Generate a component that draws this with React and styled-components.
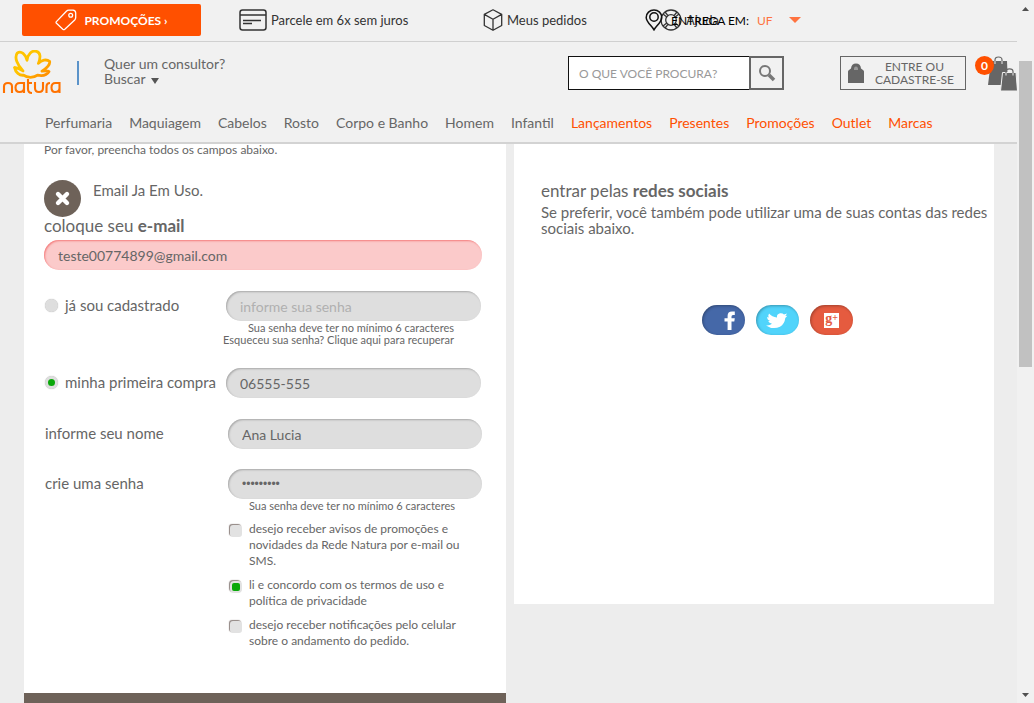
import React from "react";
import styled, { createGlobalStyle, css } from "styled-components";

const GlobalStyle = createGlobalStyle`
  *, *::before, *::after { box-sizing: border-box; }
  body {
    margin: 0;
    background: #ededed;
    color: #666;
    font-family: Lato, "Liberation Sans", sans-serif;
    font-size: 14px;
    line-height: 16px;
  }
  a { color: inherit; text-decoration: none; }
  p, h2, ul { margin: 0; padding: 0; font-weight: 400; }
  button, input { font-family: inherit; }
`;

const Shell = styled.div`
  display: grid;
  grid-template-columns: 1fr 17px;
  min-height: 100vh;
`;

const Page = styled.div`
  min-width: 0;
`;

const Header = styled.header`
  background: #f1f1f1;
  border-bottom: 2px solid #d3d3d3;
`;

const TopBar = styled.div`
  display: grid;
  grid-template-columns: 217fr 244fr 177fr 357fr;
  align-items: center;
  height: 42px;
  padding: 0 0 1px 22px;
  border-bottom: 1px solid #d0d0d0;
`;

const PromoButton = styled.button`
  display: flex;
  align-items: center;
  justify-content: center;
  gap: 7px;
  height: 32px;
  margin-right: 38px;
  padding: 0;
  border: 0;
  border-radius: 2px;
  background: #ff5000;
  color: #fff;
  font-size: 12px;
  font-weight: 700;
`;

const TopLink = styled.a`
  display: flex;
  align-items: center;
  gap: 4px;
  color: #333;
  font-size: 13px;
`;

const HelpSlot = styled.div`
  position: relative;
`;

const Delivery = styled.button`
  position: absolute;
  top: 0;
  left: -15px;
  display: flex;
  align-items: center;
  gap: 8px;
  height: 22px;
  padding: 0;
  border: 0;
  background: none;
  color: #000;
  font-size: 12px;
  white-space: nowrap;

  span { color: #ff7340; }
  svg:last-child { margin-left: 8px; }
`;

const Main = styled.div`
  display: flex;
  align-items: center;
  height: 60px;
  padding: 2px 0 0 2px;
`;

const Divider = styled.div`
  width: 2px;
  height: 24px;
  margin: 0 25px 0 16px;
  background: #5b93c9;
`;

const Consultant = styled.a`
  display: grid;
  padding-bottom: 5px;
  line-height: 15px;

  svg { margin-left: 2px; }
`;

const Search = styled.form`
  display: flex;
  width: 216px;
  height: 34px;
  margin-left: auto;
`;

const SearchInput = styled.input`
  flex: 1;
  min-width: 0;
  padding: 0 10px;
  border: 1px solid #111;
  border-right: 0;
  border-radius: 0;
  background: #fff;
  font-size: 12px;

  &::placeholder { color: #999; opacity: 1; }
`;

const SearchButton = styled.button`
  display: grid;
  place-items: center;
  width: 35px;
  padding: 0;
  border: 2px solid #666;
  background: #f1f1f1;
`;

const AccountButton = styled.button`
  display: flex;
  align-items: center;
  width: 126px;
  height: 34px;
  margin: 0 9px 0 56px;
  padding: 0 0 0 7px;
  border: 1px solid #666;
  background: transparent;
  color: #666;
  font-size: 12px;
  line-height: 13px;

  span { flex: 1; }
`;

const Cart = styled.a`
  display: flex;
  position: relative;
  width: 42px;
  height: 34px;
  justify-content: flex-end;
`;

const CartCount = styled.span`
  position: absolute;
  top: 0;
  left: 0;
  width: 19px;
  height: 19px;
  border-radius: 50%;
  background: #ff5000;
  color: #fff;
  font-size: 12px;
  font-weight: 700;
  line-height: 19px;
  text-align: center;
`;

const Nav = styled.nav`
  display: flex;
  gap: 17px;
  align-items: center;
  height: 40px;
  padding: 2px 0 0 45px;
  white-space: nowrap;
`;

const NavLink = styled.a`
  color: ${(p) => (p.$hot ? "#ff5000" : "#666")};
`;

const Content = styled.main`
  display: grid;
  grid-template-columns: minmax(0, 482fr) minmax(0, 480fr);
  gap: 8px;
  align-items: start;
  padding: 0 23px 0 24px;
`;

const FormCard = styled.form`
  background: #fff;
`;

const FormBody = styled.div`
  padding: 0 24px 44px 20px;
`;

const CardFooter = styled.div`
  height: 10px;
  background: #6e6259;
`;

const Intro = styled.p`
  font-size: 12px;
  line-height: 12px;
`;

const ErrorMessage = styled.div`
  display: flex;
  gap: 12px;
  margin-top: 24px;
  font-size: 15px;
  line-height: 20px;
`;

const EmailLabel = styled.label`
  display: block;
  font-size: 17px;
  line-height: 18px;
  padding-bottom: 5px;
`;

const Field = styled.input`
  display: block;
  width: 100%;
  height: 30px;
  padding: 0 14px;
  border: 0;
  border-radius: 15px;
  background: #dedede;
  box-shadow: inset 1px 1px 2px #a8a8a8;
  color: #666;
  font-size: 14px;
  outline: 0;

  &::placeholder { color: #b0b0b0; opacity: 1; }

  &[type="password"]:not(:placeholder-shown) {
    font-family: "Liberation Sans", sans-serif;
    font-size: 12px;
  }

  ${(p) => p.$error && css`
    background: #fbcaca;
    box-shadow: inset 1px 1px 2px #f47c7c;
  `}
`;

const Row = styled.div`
  display: grid;
  grid-template-columns: ${(p) => (p.$wide ? "184px" : "182px")} minmax(0, 1fr);
  padding-right: ${(p) => (p.$wide ? "0" : "1px")};
  margin-top: ${(p) => p.$top}px;
`;

const RowLabel = styled.label`
  display: flex;
  align-items: center;
  gap: 7px;
  height: 30px;
  padding: 0 0 2px 1px;
  font-size: 15px;
`;

const Radio = styled.input`
  appearance: none;
  width: 13px;
  height: 13px;
  margin: 0;
  border: 3px solid #dedede;
  border-radius: 50%;
  background: #dedede;
  box-shadow: 0 0 1px #aaa;

  &:checked { background: #0aa80a; }
`;

const Hint = styled.p`
  display: grid;
  justify-content: end;
  justify-items: end;
  padding: 1px 27px 0 0;
  font-size: 11px;
  line-height: 12px;
  white-space: nowrap;
`;

const Options = styled.div`
  display: grid;
  gap: 8px;
  margin: 9px 20px 0 186px;
`;

const Option = styled.label`
  display: grid;
  grid-template-columns: 13px 1fr;
  gap: 6px;
  font-size: 12px;
  line-height: 16px;
`;

const Checkbox = styled.input`
  appearance: none;
  width: 12px;
  height: 12px;
  margin: 4px 0 0;
  border: 3px solid #e2e2e2;
  border-radius: 3px;
  background: #e2e2e2;
  box-shadow: -1px -1px 1px #8f8480;

  &:checked {
    border-width: 2px;
    border-radius: 4px;
    background: #0aa80a;
  }
`;

const SocialCard = styled.section`
  min-height: 460px;
  padding: 37px 0 0 27px;
  background: #fff;
`;

const SocialTitle = styled.h2`
  font-size: 17px;
  line-height: 20px;
`;

const SocialText = styled.p`
  padding-top: 3px;
  font-size: 15px;
`;

const SocialButtons = styled.div`
  display: flex;
  justify-content: center;
  gap: 11px;
  padding: 69px 0 0 20px;
`;

const SocialButton = styled.button`
  width: 43px;
  height: 30px;
  padding: 0;
  border: 0;
  border-radius: 15px;
  background: ${(p) => p.$color};
  box-shadow: inset 1px 1px 3px rgba(0, 0, 0, 0.3);

  svg { display: block; }
`;

const Scrollbar = styled.div`
  position: sticky;
  top: 0;
  display: grid;
  grid-template-rows: 17px 44fr 306fr 319fr 17px;
  justify-items: center;
  height: 100vh;
  background: #f1f1f1;

  svg { align-self: center; }
`;

const Thumb = styled.div`
  grid-row: 3;
  width: 13px;
  background: #c1c1c1;
`;

const ArrowUp = styled.div`
  grid-row: 1;
  display: grid;
`;

const ArrowDown = styled.div`
  grid-row: 5;
  display: grid;
`;

const Triangle = ({ width, height, color, up }) => (
  <svg width={width} height={height} viewBox="0 0 10 6" preserveAspectRatio="none">
    <path d={up ? "M0 6L5 0L10 6Z" : "M0 0H10L5 6Z"} fill={color} />
  </svg>
);

const TagIcon = () => (
  <svg width="22" height="22" viewBox="0 0 22 22" fill="none" stroke="#fff" strokeWidth="1.3">
    <path d="M1.4 12.6L11.4 2.2Q12.4 1.2 13.8 1.2H18Q20.6 1.5 20.7 4V8.6Q20.7 10 19.7 11L9.8 20.2Q8.8 21 7.8 20.2L1.5 14.3Q.7 13.5 1.4 12.6Z" />
    <circle cx="15.7" cy="6.2" r="1.9" />
  </svg>
);

const CardIcon = () => (
  <svg width="28" height="22" viewBox="0 0 28 22" fill="none" stroke="#333" strokeWidth="1.5">
    <rect x="1" y="1" width="26" height="20" rx="2.5" />
    <path d="M1 6H27M4 11.5H22M4 14.5H13" />
  </svg>
);

const BoxIcon = () => (
  <svg width="20" height="22" viewBox="0 0 20 22" fill="none" stroke="#333" strokeWidth="1.3" strokeLinejoin="round">
    <path d="M10 .8L18.7 5.4V16.5L10 21.3L1.3 16.5V5.4ZM1.3 5.4L10 10.3L18.7 5.4M10 10.3V21.3" />
  </svg>
);

const HelpIcon = () => (
  <svg width="22" height="22" viewBox="0 0 22 22" fill="none" stroke="#333" strokeWidth="1.3">
    <circle cx="11" cy="11" r="10" />
    <circle cx="11" cy="11" r="5.3" />
    <path d="M3 5L6.8 8M5 3L8 6.7M14 6.7L17 3M15.2 8L19 5M15.2 14L19 17M14 15.3L17 19M8 15.3L5 19M6.8 14L3 17" />
  </svg>
);

const PinIcon = () => (
  <svg width="18" height="22" viewBox="0 0 18 22" fill="none" stroke="#111" strokeWidth="1.5">
    <path d="M9 20.8C7 17 1.2 13 1.2 8.4A7.8 7.5 0 0 1 16.8 8.4C16.8 13 11 17 9 20.8Z" />
    <circle cx="9" cy="8" r="4.2" />
  </svg>
);

const LogoLink = styled.a`
  display: grid;
  width: 59px;
  height: 46px;
`;

const Logo = () => (
  <svg width="59" height="46" viewBox="0 0 59 46" fill="none">
    <defs>
      <linearGradient id="petals" x1="0" y1="0" x2="1" y2="1">
        <stop offset="0.45" stopColor="#ffc400" />
        <stop offset="1" stopColor="#ff8500" />
      </linearGradient>
    </defs>
    <path
      d="M12.5 17.5C16.5 18 19 19.5 21 21C15.5 15 12 7.5 15.2 3.2C19 .2 23.8 4.5 25 10.3C25.7 4 30 0 34.5 1.4C38.8 2.8 38.7 7.5 36.4 13.4C39.5 9.9 44.5 9 47.6 11.3C48.6 15.2 44 18.5 40 21.2C42.8 20.8 45.7 20.4 47 21.5C44.6 25.6 39.5 26 35.5 25.2C32 28 25 28 21.5 25.2C17.5 25.6 13.5 22.5 12.5 17.5Z"
      stroke="url(#petals)"
      strokeWidth="2.8"
      strokeLinejoin="round"
    />
    <g stroke="#ff7200" strokeWidth="2.1">
      <path d="M2 43V36.5Q2 33 6 33Q10 33 10 36.5V43" />
      <path d="M22 43V33H18Q13.5 33 13.5 37.5Q13.5 42 17.5 42Q22 42 22 38" />
      <path d="M26 29V39Q26 43 30 43M26 33H30" />
      <path d="M33 32V38Q33 42 37 42Q41 42 41 38V32" />
      <path d="M44.5 43V37Q44.5 33 48 33" />
      <path d="M57.5 43V33H53.5Q49.5 33 49.5 37.5Q49.5 42 53 42Q57.5 42 57.5 38" />
    </g>
  </svg>
);

const SearchIcon = () => (
  <svg width="18" height="18" viewBox="0 0 18 18" fill="none" stroke="#777">
    <circle cx="7" cy="7" r="5" strokeWidth="2" />
    <path d="M11 11L16 16" strokeWidth="3.5" />
  </svg>
);

const LockIcon = () => (
  <svg width="16" height="20" viewBox="0 0 16 20">
    <path d="M0 8.5Q0 7.5 1 7L3 5.5Q3.5 .5 8 .5T13 5.5L15 7Q16 7.5 16 8.5V20H0Z" fill="#666" />
    <path d="M6 7Q5.7 3.5 8 3.5T10 7Z" fill="#999" />
  </svg>
);

const BagsIcon = () => (
  <svg width="30" height="35" viewBox="0 0 30 35" fill="none">
    <path d="M4 5H20L21 29H1Z" fill="#666" />
    <path d="M8 8V4Q8 1 11.5 1T15 4V8" stroke="#666" strokeWidth="1.2" />
    <path d="M8 5V8M15 5V8" stroke="#eee" />
    <path d="M15.5 16.5H29L30.5 35H13.5Z" fill="#666" stroke="#f1f1f1" />
    <path d="M19 17V15.5Q19 12.8 22.5 12.8T26 15.5V17" stroke="#666" strokeWidth="1.2" />
    <path d="M19 17V19.5M26 17V19.5" stroke="#eee" />
  </svg>
);

const ErrorIcon = () => (
  <svg width="37" height="37" viewBox="0 0 37 37">
    <circle cx="18.5" cy="18.5" r="18.5" fill="#6e6259" />
    <path d="M14 14L23 23M23 14L14 23" stroke="#fff" strokeWidth="4.4" strokeLinecap="round" />
  </svg>
);

const FacebookIcon = () => (
  <svg width="43" height="30" viewBox="0 0 43 30">
    <path d="M25.6 25V16.6H22.5V13.2H25.6V10.8Q25.6 6.5 30 6.5H32.8V10H31Q29.5 10 29.5 11.5V13.2H32.8L32.3 16.6H29.5V25Z" fill="#fff" />
  </svg>
);

const TwitterIcon = () => (
  <svg width="43" height="30" viewBox="0 0 43 30">
    <path d="M10 20.4Q13.6 20.8 16 18.7Q13 18.2 12.2 16H14Q11 14.7 11.2 11.9L13 12.4Q11.7 10.5 13 8.4Q16 12 21 12.4Q20.4 9.3 24 8.3Q26.5 8 28 9.4L31 8.6L29.4 11L31.4 10.8L29.3 13Q28.6 19 24 21.7Q17 25 10 20.4Z" fill="#fff" />
  </svg>
);

const GPlusMark = styled.span`
  display: flex;
  justify-content: center;
  width: 15px;
  height: 15px;
  margin: 0 auto;
  background: #fff;
  color: #e55b3f;
  font: 700 14px/11px "Liberation Serif", serif;

  sup { font-size: 10px; line-height: 10px; }
`;

const NAV_ITEMS = [
  ["Perfumaria"], ["Maquiagem"], ["Cabelos"], ["Rosto"], ["Corpo e Banho"], ["Homem"], ["Infantil"],
  ["Lançamentos", true], ["Presentes", true], ["Promoções", true], ["Outlet", true], ["Marcas", true],
];

export default function App() {
  return (
    <Shell>
      <GlobalStyle />
      <Page>
        <Header>
          <TopBar>
            <PromoButton type="button"><TagIcon /><span>PROMOÇÕES ›</span></PromoButton>
            <TopLink href="#parcelas"><CardIcon />Parcele em 6x sem juros</TopLink>
            <TopLink href="#pedidos"><BoxIcon />Meus pedidos</TopLink>
            <HelpSlot>
              <TopLink href="#ajuda"><HelpIcon />Ajuda</TopLink>
              <Delivery type="button">
                <PinIcon />ENTREGA EM: <span>UF</span>
                <Triangle width={12} height={6} color="#ff7340" />
              </Delivery>
            </HelpSlot>
          </TopBar>
          <Main>
            <LogoLink href="#inicio" aria-label="natura"><Logo /></LogoLink>
            <Divider />
            <Consultant href="#consultor">
              <span>Quer um consultor?</span>
              <span>Buscar <Triangle width={8} height={6} color="#555" /></span>
            </Consultant>
            <Search onSubmit={(e) => e.preventDefault()}>
              <SearchInput type="search" aria-label="Buscar produtos" placeholder="O QUE VOCÊ PROCURA?" />
              <SearchButton type="submit" aria-label="Buscar"><SearchIcon /></SearchButton>
            </Search>
            <AccountButton type="button"><LockIcon /><span>ENTRE OU<br />CADASTRE-SE</span></AccountButton>
            <Cart href="#sacola" aria-label="Sacola"><BagsIcon /><CartCount>0</CartCount></Cart>
          </Main>
          <Nav>
            {NAV_ITEMS.map(([name, hot]) => <NavLink key={name} href="#categoria" $hot={hot}>{name}</NavLink>)}
          </Nav>
        </Header>
        <Content>
          <FormCard onSubmit={(e) => e.preventDefault()}>
            <FormBody>
              <Intro>Por favor, preencha todos os campos abaixo.</Intro>
              <ErrorMessage role="alert"><ErrorIcon /><p>Email Ja Em Uso.</p></ErrorMessage>
              <EmailLabel htmlFor="email">coloque seu <b>e-mail</b></EmailLabel>
              <Field id="email" type="email" $error defaultValue="teste00774899@gmail.com" />
              <Row $top={21}>
                <RowLabel><Radio type="radio" name="cliente" />já sou cadastrado</RowLabel>
                <div>
                  <Field type="password" aria-label="Senha" placeholder="informe sua senha" />
                  <Hint><span>Sua senha deve ter no mínimo 6 caracteres</span><a href="#recuperar">Esqueceu sua senha? Clique aqui para recuperar</a></Hint>
                </div>
              </Row>
              <Row $top={22}>
                <RowLabel><Radio type="radio" name="cliente" defaultChecked />minha primeira compra</RowLabel>
                <Field type="text" aria-label="CEP" defaultValue="06555-555" />
              </Row>
              <Row $wide $top={21}>
                <RowLabel htmlFor="nome">informe seu nome</RowLabel>
                <Field id="nome" type="text" defaultValue="Ana Lucia" />
              </Row>
              <Row $wide $top={20}>
                <RowLabel htmlFor="senha">crie uma senha</RowLabel>
                <div>
                  <Field id="senha" type="password" defaultValue="senha1234" />
                  <Hint><span>Sua senha deve ter no mínimo 6 caracteres</span></Hint>
                </div>
              </Row>
              <Options>
                <Option><Checkbox type="checkbox" /><span>desejo receber avisos de promoções e novidades da Rede Natura por e-mail ou SMS.</span></Option>
                <Option><Checkbox type="checkbox" defaultChecked /><span>li e concordo com os <a href="#termos">termos de uso e política de privacidade</a></span></Option>
                <Option><Checkbox type="checkbox" /><span>desejo receber notificações pelo celular sobre o andamento do pedido.</span></Option>
              </Options>
            </FormBody>
            <CardFooter />
          </FormCard>
          <SocialCard>
            <SocialTitle>entrar pelas <b>redes sociais</b></SocialTitle>
            <SocialText>Se preferir, você também pode utilizar uma de suas contas das redes sociais abaixo.</SocialText>
            <SocialButtons>
              <SocialButton type="button" $color="#4568a8" aria-label="Facebook"><FacebookIcon /></SocialButton>
              <SocialButton type="button" $color="#51d4fb" aria-label="Twitter"><TwitterIcon /></SocialButton>
              <SocialButton type="button" $color="#e55b3f" aria-label="Google+"><GPlusMark>g<sup>+</sup></GPlusMark></SocialButton>
            </SocialButtons>
          </SocialCard>
        </Content>
      </Page>
      <Scrollbar aria-hidden="true">
        <ArrowUp><Triangle up width={7} height={4} color="#505050" /></ArrowUp>
        <Thumb />
        <ArrowDown><Triangle width={7} height={4} color="#505050" /></ArrowDown>
      </Scrollbar>
    </Shell>
  );
}
